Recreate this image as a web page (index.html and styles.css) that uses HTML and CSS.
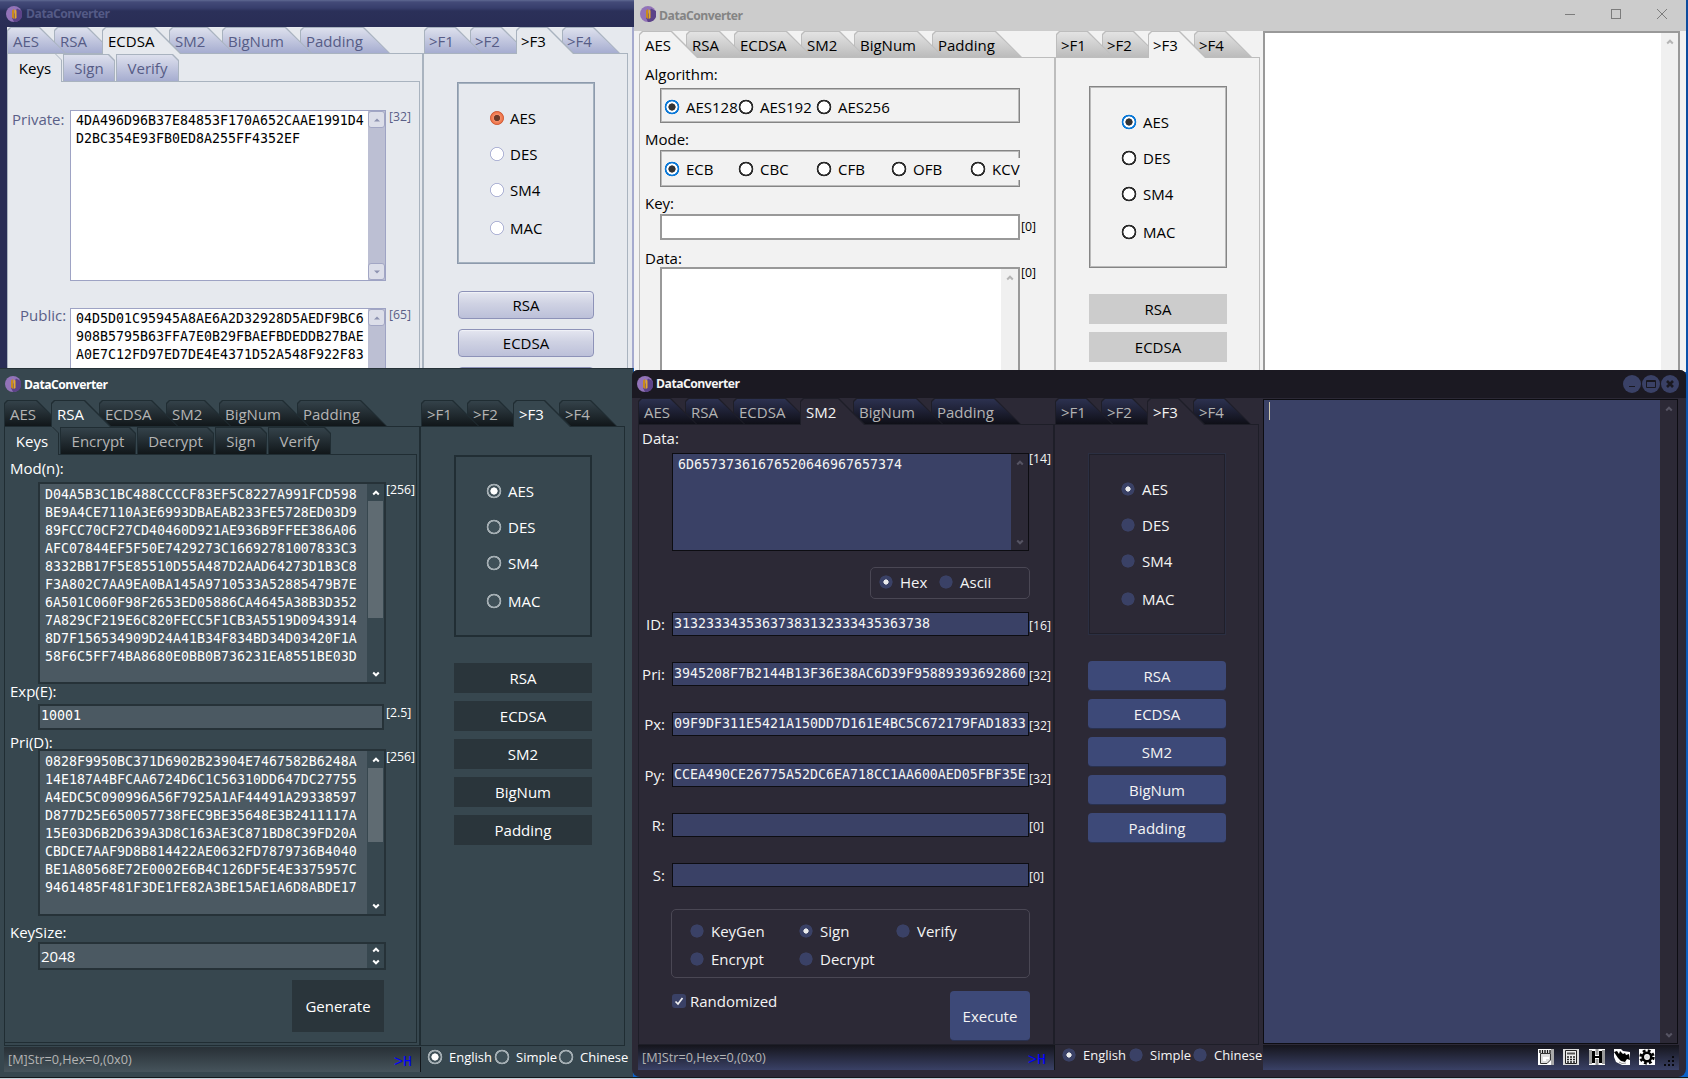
FILE: index.html
```html
<!DOCTYPE html>
<html lang="en">
<head>
    <meta charset="UTF-8">
    <meta name="viewport" content="width=device-width, initial-scale=1.0">
    <title>DataConverter</title>
    <link rel="stylesheet" href="styles.css">
</head>
<body>
    <!-- shared icons -->
    <svg class="defs" width="0" height="0">
        <symbol id="logo" viewBox="0 0 16 16">
            <circle cx="8" cy="8" r="8" fill="#9273b8"/>
            <path d="M11 2.5 L16 5 A8 8 0 0 1 8 16 L6 12 Z" fill="#5c4388"/>
            <path d="M6 4.5 L8 3 V13 L6 11.5 Z" fill="#c98a1c"/>
            <path d="M8.6 3.5 L10.5 4.5 V12 L8.6 13 Z" fill="#e3a82b"/>
        </symbol>
        <symbol id="up" viewBox="0 0 8 8"><path d="M1.2 5.5 L4 2.7 L6.8 5.5" fill="none" stroke="currentColor" stroke-width="2"/></symbol>
        <symbol id="down" viewBox="0 0 8 8"><path d="M1.2 2.5 L4 5.3 L6.8 2.5" fill="none" stroke="currentColor" stroke-width="2"/></symbol>
        <symbol id="tri-up" viewBox="0 0 8 8"><path d="M1 5.5 L4 2.5 L7 5.5 Z" fill="currentColor"/></symbol>
        <symbol id="tri-down" viewBox="0 0 8 8"><path d="M1 2.5 L4 5.5 L7 2.5 Z" fill="currentColor"/></symbol>
    </svg>

    <!-- light blue skin -->
    <div class="window navy">
        <div class="title"><svg class="logo"><use href="#logo"/></svg><span>DataConverter</span></div>
        <div class="body">
            <div class="left">
                <div class="tabs">
                    <div class="tab t1"><span>AES</span></div>
                    <div class="tab t2"><span>RSA</span></div>
                    <div class="tab t3 active"><span>ECDSA</span></div>
                    <div class="tab t4"><span>SM2</span></div>
                    <div class="tab t5"><span>BigNum</span></div>
                    <div class="tab t6"><span>Padding</span></div>
                </div>
                <div class="page">
                    <div class="subtabs">
                        <div class="subtab s-keys active"><span>Keys</span></div>
                        <div class="subtab s-sign"><span>Sign</span></div>
                        <div class="subtab s-verify"><span>Verify</span></div>
                    </div>
                    <div class="subpage">
                        <div class="row private">
                            <label>Private:</label>
                            <div class="memo">
                                <pre>4DA496D96B37E84853F170A652CAAE1991D4
D2BC354E93FB0ED8A255FF4352EF</pre>
                                <div class="scroll"><i><svg><use href="#tri-up"/></svg></i><i><svg><use href="#tri-down"/></svg></i></div>
                            </div>
                            <span class="len">[32]</span>
                        </div>
                        <div class="row public">
                            <label>Public:</label>
                            <div class="memo">
                                <pre>04D5D01C95945A8AE6A2D32928D5AEDF9BC6
908B5795B63FFA7E0B29FBAEFBDEDDB27BAE
A0E7C12FD97ED7DE4E4371D52A548F922F83</pre>
                                <div class="scroll"><i><svg><use href="#tri-up"/></svg></i><i><svg><use href="#tri-down"/></svg></i></div>
                            </div>
                            <span class="len">[65]</span>
                        </div>
                    </div>
                </div>
            </div>
            <div class="mid">
                <div class="tabs">
                    <div class="tab f"><span>&gt;F1</span></div>
                    <div class="tab f"><span>&gt;F2</span></div>
                    <div class="tab f active"><span>&gt;F3</span></div>
                    <div class="tab f"><span>&gt;F4</span></div>
                </div>
                <div class="page">
                    <div class="group algos">
                        <div class="radio on"><i></i>AES</div>
                        <div class="radio"><i></i>DES</div>
                        <div class="radio"><i></i>SM4</div>
                        <div class="radio"><i></i>MAC</div>
                    </div>
                    <div class="buttons">
                        <div class="btn">RSA</div>
                        <div class="btn">ECDSA</div>
                        <div class="btn"></div>
                    </div>
                </div>
            </div>
        </div>
    </div>

    <!-- light gray skin -->
    <div class="window light">
        <div class="title">
            <svg class="logo"><use href="#logo"/></svg><span>DataConverter</span>
            <svg class="controls" width="106" height="12" viewBox="0 0 106 12" fill="none" stroke="#7c7c7c">
                <path d="M0 6.5 H10"/>
                <rect x="46.5" y="1.5" width="9" height="9"/>
                <path d="M92 1 L102 11 M102 1 L92 11"/>
            </svg>
        </div>
        <div class="body">
            <div class="left">
                <div class="tabs">
                    <div class="tab t1 active"><span>AES</span></div>
                    <div class="tab t2"><span>RSA</span></div>
                    <div class="tab t3"><span>ECDSA</span></div>
                    <div class="tab t4"><span>SM2</span></div>
                    <div class="tab t5"><span>BigNum</span></div>
                    <div class="tab t6"><span>Padding</span></div>
                </div>
                <div class="page form">
                    <label class="l-alg">Algorithm:</label>
                    <div class="group opts g-alg">
                        <div class="radio on"><i></i>AES128</div>
                        <div class="radio"><i></i>AES192</div>
                        <div class="radio"><i></i>AES256</div>
                    </div>
                    <label class="l-mode">Mode:</label>
                    <div class="group opts g-mode">
                        <div class="radio on"><i></i>ECB</div>
                        <div class="radio"><i></i>CBC</div>
                        <div class="radio"><i></i>CFB</div>
                        <div class="radio"><i></i>OFB</div>
                        <div class="radio last"><i></i>KCV</div>
                    </div>
                    <label class="l-key">Key:</label>
                    <div class="row key"><div class="field"></div><span class="len">[0]</span></div>
                    <label class="l-data">Data:</label>
                    <div class="row data">
                        <div class="memo"><pre></pre><div class="scroll"><i><svg><use href="#up"/></svg></i></div></div>
                        <span class="len">[0]</span>
                    </div>
                </div>
            </div>
            <div class="mid">
                <div class="tabs">
                    <div class="tab f"><span>&gt;F1</span></div>
                    <div class="tab f"><span>&gt;F2</span></div>
                    <div class="tab f active"><span>&gt;F3</span></div>
                    <div class="tab f"><span>&gt;F4</span></div>
                </div>
                <div class="page">
                    <div class="group algos">
                        <div class="radio on"><i></i>AES</div>
                        <div class="radio"><i></i>DES</div>
                        <div class="radio"><i></i>SM4</div>
                        <div class="radio"><i></i>MAC</div>
                    </div>
                    <div class="buttons">
                        <div class="btn">RSA</div>
                        <div class="btn">ECDSA</div>
                    </div>
                </div>
            </div>
            <div class="editor"><div class="scroll"><i><svg><use href="#up"/></svg></i></div></div>
        </div>
    </div>

    <!-- slate skin -->
    <div class="window slate">
        <div class="title"><svg class="logo"><use href="#logo"/></svg><span>DataConverter</span></div>
        <div class="body">
            <div class="left">
                <div class="tabs">
                    <div class="tab t1"><span>AES</span></div>
                    <div class="tab t2 active"><span>RSA</span></div>
                    <div class="tab t3"><span>ECDSA</span></div>
                    <div class="tab t4"><span>SM2</span></div>
                    <div class="tab t5"><span>BigNum</span></div>
                    <div class="tab t6"><span>Padding</span></div>
                </div>
                <div class="page">
                    <div class="subtabs">
                        <div class="subtab s-keys active"><span>Keys</span></div>
                        <div class="subtab s-enc"><span>Encrypt</span></div>
                        <div class="subtab s-dec"><span>Decrypt</span></div>
                        <div class="subtab s-sign"><span>Sign</span></div>
                        <div class="subtab s-verify"><span>Verify</span></div>
                    </div>
                    <div class="subpage form">
                        <label class="l-mod">Mod(n):</label>
                        <div class="row mod">
                            <div class="memo">
                                <pre>D04A5B3C1BC488CCCCF83EF5C8227A991FCD598
BE9A4CE7110A3E6993DBAEAB233FE5728ED03D9
89FCC70CF27CD40460D921AE936B9FFEE386A06
AFC07844EF5F50E7429273C16692781007833C3
8332BB17F5E85510D55A487D2AAD64273D1B3C8
F3A802C7AA9EA0BA145A9710533A52885479B7E
6A501C060F98F2653ED05886CA4645A38B3D352
7A829CF219E6C820FECC5F1CB3A5519D0943914
8D7F156534909D24A41B34F834BD34D03420F1A
58F6C5FF74BA8680E0BB0B736231EA8551BE03D</pre>
                                <div class="scroll"><i><svg><use href="#up"/></svg></i><b></b><i><svg><use href="#down"/></svg></i></div>
                            </div>
                            <span class="len">[256]</span>
                        </div>
                        <label class="l-exp">Exp(E):</label>
                        <div class="row exp"><div class="field">10001</div><span class="len">[2.5]</span></div>
                        <label class="l-pri">Pri(D):</label>
                        <div class="row prid">
                            <div class="memo">
                                <pre>0828F9950BC371D6902B23904E7467582B6248A
14E187A4BFCAA6724D6C1C56310DD647DC27755
A4EDC5C090996A56F7925A1AF44491A29338597
D877D25E650057738FEC9BE35648E3B2411117A
15E03D6B2D639A3D8C163AE3C871BD8C39FD20A
CBDCE7AAF9D8B814422AE0632FD7879736B4040
BE1A80568E72E0002E6B4C126DF5E4E3375957C
9461485F481F3DE1FE82A3BE15AE1A6D8ABDE17</pre>
                                <div class="scroll"><i><svg><use href="#up"/></svg></i><b></b><i><svg><use href="#down"/></svg></i></div>
                            </div>
                            <span class="len">[256]</span>
                        </div>
                        <label class="l-size">KeySize:</label>
                        <div class="spin"><span>2048</span><div class="arrows"><svg><use href="#up"/></svg><svg><use href="#down"/></svg></div></div>
                        <div class="generate">Generate</div>
                    </div>
                </div>
            </div>
            <div class="mid">
                <div class="tabs">
                    <div class="tab f"><span>&gt;F1</span></div>
                    <div class="tab f"><span>&gt;F2</span></div>
                    <div class="tab f active"><span>&gt;F3</span></div>
                    <div class="tab f"><span>&gt;F4</span></div>
                </div>
                <div class="page">
                    <div class="group algos">
                        <div class="radio on"><i></i>AES</div>
                        <div class="radio"><i></i>DES</div>
                        <div class="radio"><i></i>SM4</div>
                        <div class="radio"><i></i>MAC</div>
                    </div>
                    <div class="buttons">
                        <div class="btn">RSA</div>
                        <div class="btn">ECDSA</div>
                        <div class="btn">SM2</div>
                        <div class="btn">BigNum</div>
                        <div class="btn">Padding</div>
                    </div>
                </div>
            </div>
        </div>
        <div class="status">
            <div class="msg"><span>[M]Str=0,Hex=0,(0x0)</span><em>&gt;H</em></div>
            <div class="langs">
                <div class="radio on"><i></i>English</div>
                <div class="radio"><i></i>Simple</div>
                <div class="radio"><i></i>Chinese</div>
            </div>
        </div>
    </div>

    <!-- dark skin -->
    <div class="window dark">
        <div class="title">
            <svg class="logo"><use href="#logo"/></svg><span>DataConverter</span>
            <svg class="controls" width="56" height="18" viewBox="0 0 56 18">
                <g fill="#3a4166"><circle cx="9" cy="9" r="9"/><circle cx="28" cy="9" r="9"/><circle cx="47" cy="9" r="9"/></g>
                <path d="M6 11.5 H12" stroke="#191820"/>
                <path d="M23.5 5.5 H32.5 V12.5 H23.5 Z M23.5 6.5 H32.5" fill="none" stroke="#191820"/>
                <path d="M44 6 L50 12 M50 6 L44 12" stroke="#191820" stroke-width="2.6"/>
            </svg>
        </div>
        <div class="body">
            <div class="left">
                <div class="tabs">
                    <div class="tab t1"><span>AES</span></div>
                    <div class="tab t2"><span>RSA</span></div>
                    <div class="tab t3"><span>ECDSA</span></div>
                    <div class="tab t4 active"><span>SM2</span></div>
                    <div class="tab t5"><span>BigNum</span></div>
                    <div class="tab t6"><span>Padding</span></div>
                </div>
                <div class="page form">
                    <label class="l-sm2">Data:</label>
                    <div class="row sm2">
                        <div class="memo"><pre>6D65737361676520646967657374</pre><div class="scroll"><i><svg><use href="#up"/></svg></i><i><svg><use href="#down"/></svg></i></div></div>
                        <span class="len">[14]</span>
                    </div>
                    <div class="group enc">
                        <div class="radio on"><i></i>Hex</div>
                        <div class="radio"><i></i>Ascii</div>
                    </div>
                    <div class="row line r-id"><label>ID:</label><div class="field">31323334353637383132333435363738</div><span class="len">[16]</span></div>
                    <div class="row line"><label>Pri:</label><div class="field">3945208F7B2144B13F36E38AC6D39F95889393692860</div><span class="len">[32]</span></div>
                    <div class="row line"><label>Px:</label><div class="field">09F9DF311E5421A150DD7D161E4BC5C672179FAD1833</div><span class="len">[32]</span></div>
                    <div class="row line r-py"><label>Py:</label><div class="field">CCEA490CE26775A52DC6EA718CC1AA600AED05FBF35E</div><span class="len">[32]</span></div>
                    <div class="row line"><label>R:</label><div class="field"></div><span class="len">[0]</span></div>
                    <div class="row line"><label>S:</label><div class="field"></div><span class="len">[0]</span></div>
                    <div class="group ops">
                        <div class="radio"><i></i>KeyGen</div>
                        <div class="radio on"><i></i>Sign</div>
                        <div class="radio"><i></i>Verify</div>
                        <div class="radio"><i></i>Encrypt</div>
                        <div class="radio"><i></i>Decrypt</div>
                    </div>
                    <div class="exec-row">
                        <div class="check">
                            <svg width="14" height="14" viewBox="0 0 14 14"><rect width="14" height="14" rx="3" fill="#3a4166"/><path d="M3.5 7.5 L6 10 L10.5 4" fill="none" stroke="#f0f0f0" stroke-width="1.7"/></svg>
                            <span>Randomized</span>
                        </div>
                        <div class="execute">Execute</div>
                    </div>
                </div>
            </div>
            <div class="mid">
                <div class="tabs">
                    <div class="tab f"><span>&gt;F1</span></div>
                    <div class="tab f"><span>&gt;F2</span></div>
                    <div class="tab f active"><span>&gt;F3</span></div>
                    <div class="tab f"><span>&gt;F4</span></div>
                </div>
                <div class="page">
                    <div class="group algos">
                        <div class="radio on"><i></i>AES</div>
                        <div class="radio"><i></i>DES</div>
                        <div class="radio"><i></i>SM4</div>
                        <div class="radio"><i></i>MAC</div>
                    </div>
                    <div class="buttons">
                        <div class="btn">RSA</div>
                        <div class="btn">ECDSA</div>
                        <div class="btn">SM2</div>
                        <div class="btn">BigNum</div>
                        <div class="btn">Padding</div>
                    </div>
                </div>
            </div>
            <div class="editor"><div class="caret"></div><div class="scroll"><i><svg><use href="#up"/></svg></i><i><svg><use href="#down"/></svg></i></div></div>
        </div>
        <div class="status">
            <div class="msg"><span>[M]Str=0,Hex=0,(0x0)</span><em>&gt;H</em></div>
            <div class="langs">
                <div class="radio on"><i></i>English</div>
                <div class="radio"><i></i>Simple</div>
                <div class="radio"><i></i>Chinese</div>
            </div>
            <div class="tools">
                <svg width="16" height="16" viewBox="0 0 16 16"><path d="M0 0 H16 V16 H0 Z" fill="#fff"/><path d="M13 0 H16 V16 H13 Z" fill="#aaa"/><path d="M2 1 V4 M4.5 1 V4 M7 1 V4 M9.5 1 V4 M12 1 V4" stroke="#111" stroke-width="1.4"/><path d="M2.5 4.5 H12.5 V11 L9 14.5 H2.5 Z" fill="#ddd" stroke="#333"/><path d="M5 8 H11 V10 H8 V12 H5 Z" fill="#fff"/></svg>
                <svg width="16" height="16" viewBox="0 0 16 16"><path d="M0 0 H16 V16 H0 Z" fill="#ddd"/><path d="M2.5 1.5 H13.5 V14.5 H2.5 Z" fill="#eee" stroke="#222"/><path d="M4 4.5 H12" stroke="#555" stroke-width="2"/><path d="M4 8 H12 M4 10.5 H12 M4 13 H12" stroke="#222" stroke-width="1.5" stroke-dasharray="2 1"/></svg>
                <svg class="h" width="16" height="16" viewBox="0 0 16 16"><path d="M0 0 H16 V16 H0 Z" fill="#fff"/><path d="M0 1 H3 V15 H0 Z M13 1 H16 V15 H13 Z M6.5 0 H9.5 V6 H6.5 Z M6.5 10 H9.5 V16 H6.5 Z" fill="#999"/><path d="M3 2 H6 V7 H10 V2 H13 V14 H10 V9 H6 V14 H3 Z" fill="#000"/></svg>
                <svg width="16" height="16" viewBox="0 0 16 16"><path d="M0 0 H7 L9 2 L16 3 V16 H8 L2 13 L0 8 Z" fill="#fff"/><path d="M0 3 L3 2 L5 5 L6 2 L9 5 L11 4 L12 6 L15 5 L16 11 L13 10 L11 13 L7 12 L4 9 Z" fill="#000"/><path d="M5 13 L8 14.5 L12 14" stroke="#999" fill="none"/></svg>
                <svg width="16" height="16" viewBox="0 0 16 16"><path d="M0 0 H16 V16 H0 Z" fill="#fff"/><circle cx="8" cy="8" r="6.3" fill="none" stroke="#000" stroke-width="2.8" stroke-dasharray="2.7 2.25"/><circle cx="8" cy="8" r="4.2" fill="#fff" stroke="#000" stroke-width="2.6"/><circle cx="8" cy="8" r="2" fill="#ddd"/></svg>
                <svg class="grip" width="11" height="11" viewBox="0 0 11 11" fill="#08080c"><path d="M8 0 h2 v2 h-2z M4 4 h2 v2 h-2z M8 4 h2 v2 h-2z M0 8 h2 v2 h-2z M4 8 h2 v2 h-2z M8 8 h2 v2 h-2z"/></svg>
            </div>
        </div>
    </div>
</body>
</html>
```
FILE: styles.css
```css
* {
    box-sizing: border-box;
}

body {
    margin: 0;
    width: 1688px;
    height: 1079px;
    overflow: hidden;
    position: relative;
    background: linear-gradient(#0c4a9c, #0a63c9 1077px, #15181b 1077px, #15181b 1078px, #c3d2da 1078px);
    font-family: "Open Sans", "Noto Sans", sans-serif;
    font-size: 15px;
    line-height: 20px;
}

.defs {
    position: absolute;
}

/* ---------- skins ---------- */
.navy {
    --bg: #e6e9ee;
    --text: #000;
    --tab-text: #565c86;
    --label: #5a5f87;
    --line: #a9b3bf;
    --tab1: #dde0ed;
    --tab2: #a6add0;
    --input: #fff;
    --input-line: #9ea3c4;
    --track: #bcbfd3;
    --arrow: #8d92b0;
    --group: #8d9aac;
    left: 0;
    top: 0;
    width: 634px;
    height: 368px;
}

.light {
    --bg: #f2f2f2;
    --text: #000;
    --tab-text: #000;
    --label: #000;
    --line: #bdbdbd;
    --tab1: #e3e3e3;
    --tab2: #bcbcbc;
    --input: #fff;
    --input-line: #999;
    --track: #f0f0f0;
    --arrow: #b4b4b4;
    --group: #858585;
    left: 634px;
    top: 0;
    width: 1052px;
    height: 372px;
}

.slate {
    --bg: #37474f;
    --text: #fff;
    --tab-text: #b4b4b4;
    --label: #fff;
    --line: #202d33;
    --tab1: #34424a;
    --tab2: #11171a;
    --input: #4b5962;
    --input-line: #263238;
    --track: #37474f;
    --arrow: #fff;
    --group: #212e34;
    left: 0;
    top: 368px;
    width: 633px;
    height: 709px;
}

.dark {
    --bg: #2c2936;
    --text: #f4f4f4;
    --tab-text: #b4b4b4;
    --label: #f4f4f4;
    --line: #1e1e28;
    --tab1: #2c3150;
    --tab2: #0f0f17;
    --input: #3a4166;
    --input-line: #0d0d12;
    --track: #2c2936;
    --arrow: #565463;
    --group: #2b2f42;
    left: 632px;
    top: 370px;
    width: 1054px;
    height: 707px;
    border-radius: 6px 6px 8px 8px;
}

.window {
    position: absolute;
    background: var(--bg);
    color: var(--text);
    overflow: hidden;
}

/* ---------- title bar ---------- */
.title {
    display: flex;
    align-items: center;
    font-weight: bold;
    font-size: 12.2px;
    letter-spacing: -0.5px;
}

.logo {
    width: 16px;
    height: 16px;
    margin-right: 3px;
}

.navy .title {
    height: 27px;
    padding-left: 6px;
    background: linear-gradient(#5f6992 0, #434a78 2px, #373e6c 8px, #2b3059 11px, #292d55);
    color: #545a86;
}

.navy .logo {
    margin-right: 4px;
}

.light .title {
    height: 31px;
    padding: 0 15px 3px 6px;
    background: #ccc;
    color: #848484;
}

.light .title span {
    padding-top: 3px;
}

.slate .title {
    height: 32px;
    padding: 0 0 2px 5px;
    border-top: 1px solid #263238;
}

.slate .title span {
    padding-top: 2px;
}

.dark .title {
    height: 28px;
    padding: 0 7px 0 5px;
    background: #1b1922;
}

.controls {
    margin-left: auto;
}

/* ---------- layout ---------- */
.body {
    display: flex;
    height: 646px;
}

.navy .body {
    border-left: 7px solid #292d55;
    border-right: 2px solid #a5aace;
}

.light .body {
    padding-left: 5px;
}

.slate .body {
    padding-left: 4px;
}

.dark .body {
    height: 647px;
    padding-left: 6px;
}

.left {
    width: 417px;
    display: flex;
    flex-direction: column;
}

.mid {
    width: 204px;
    display: flex;
    flex-direction: column;
    margin-right: 3px;
}

.dark .mid {
    margin-right: 4px;
}

.page {
    flex: 1;
    border: 1px solid var(--line);
}

.left .page {
    border-right-width: 2px;
}

.mid .page {
    border-left: 0;
}

.tabs {
    display: flex;
    height: 26px;
    isolation: isolate;
}

/* ---------- folder tabs ---------- */
.tab {
    position: relative;
    height: 26px;
    padding-left: 6px;
    line-height: 28px;
    color: var(--tab-text);
}

.tab span {
    position: relative;
    z-index: 10;
}

.tab::before,
.tab::after {
    content: "";
    position: absolute;
    left: 0;
    right: -12px;
    top: 0;
    bottom: 0;
    background: var(--line);
    clip-path: polygon(0 3px, 3px 0, calc(100% - 26px) 0, 100% 100%, 0 100%);
    z-index: 1;
}

.tab::after {
    left: 1px;
    right: -11px;
    top: 1px;
    background: linear-gradient(var(--tab1), var(--tab2));
}

.tab:nth-child(1)::before, .tab:nth-child(1)::after { z-index: 6; }
.tab:nth-child(2)::before, .tab:nth-child(2)::after { z-index: 5; }
.tab:nth-child(3)::before, .tab:nth-child(3)::after { z-index: 4; }
.tab:nth-child(4)::before, .tab:nth-child(4)::after { z-index: 3; }
.tab:nth-child(5)::before, .tab:nth-child(5)::after { z-index: 2; }

.tab.active {
    color: var(--text);
}

.tab.active::before,
.tab.active::after {
    z-index: 7;
}

.tab.active::after {
    bottom: -1px;
    background: var(--bg);
}

.t1 { width: 47px; }
.t2 { width: 48px; }
.t3 { width: 67px; }
.t4 { width: 53px; }
.t5 { width: 78px; }
.t6 { width: 78px; }
.f { width: 46px; padding-left: 5px; }
.slate .f, .dark .f { padding-left: 6px; }

/* ---------- sub tabs ---------- */
.subtabs {
    display: flex;
    gap: 1px;
    height: 27px;
    isolation: isolate;
}

.subtab {
    position: relative;
    height: 27px;
    text-align: center;
    line-height: 29px;
    color: var(--tab-text);
    background: var(--line);
    clip-path: polygon(0 0, calc(100% - 6px) 0, 100% 6px, 100% 100%, 0 100%);
}

.subtab span {
    position: relative;
}

.subtab::before {
    content: "";
    position: absolute;
    left: 1px;
    right: 1px;
    top: 1px;
    bottom: 0;
    background: linear-gradient(var(--tab1), var(--tab2));
    clip-path: polygon(0 0, calc(100% - 6px) 0, 100% 6px, 100% 100%, 0 100%);
}

.subtab.active {
    color: var(--text);
    height: 28px;
}

.subtab.active::before {
    left: 0;
    top: 0;
    background: var(--bg);
}

.s-keys { width: 54px; }
.s-sign { width: 52px; }
.s-verify { width: 63px; }
.s-enc { width: 76px; }
.s-dec { width: 77px; }

.subpage {
    margin-right: 2px;
    border-top: 1px solid var(--line);
    border-right: 1px solid var(--line);
    height: 590px;
}

.slate .subpage {
    border-bottom: 1px solid var(--line);
}

/* ---------- inputs ---------- */
.form {
    display: flex;
    flex-direction: column;
}

label {
    color: var(--label);
    padding-left: 5px;
    height: 20px;
}

.row {
    display: flex;
    align-items: flex-start;
}

.len {
    font-size: 12.3px;
    line-height: 16px;
    color: var(--label);
}

.memo {
    display: flex;
    background: var(--input);
    border: 2px solid var(--input-line);
    overflow: hidden;
}

pre,
.field {
    margin: 0;
    font-family: "DejaVu Sans Mono", monospace;
    font-size: 13.29px;
    line-height: 18px;
    white-space: pre;
}

pre {
    flex: 1;
    overflow: hidden;
    padding: 2px 0 0 5px;
}

.field {
    background: var(--input);
    border: 2px solid var(--input-line);
    overflow: hidden;
}

.scroll {
    width: 17px;
    background: var(--track);
    color: var(--arrow);
    display: flex;
    flex-direction: column;
}

.scroll i {
    height: 17px;
    display: flex;
    align-items: center;
    justify-content: center;
}

.scroll i:nth-last-child(1):not(:first-child) {
    margin-top: auto;
}

.scroll svg,
.arrows svg {
    width: 8px;
    height: 8px;
}

.scroll b {
    margin: 0 1px;
    background: #5f6b72;
}

/* ---------- radios ---------- */
.radio {
    display: flex;
    align-items: center;
    gap: 6px;
    line-height: 22px;
    white-space: nowrap;
}

.radio i {
    flex: none;
    width: 16px;
    height: 16px;
    background: radial-gradient(circle, #fff 5.8px, #b0b5d6 6.3px, #b0b5d6 6.8px, transparent 7.2px);
}

.navy .radio {
    gap: 5px;
}

.navy .radio.on i {
    background: radial-gradient(circle, #6d3b2a 2.8px, #f4906b 3.4px, #ee7247 5.8px, #c95a38 6.3px, #d97a5c 6.8px, transparent 7.2px);
}

.light .radio i {
    background: radial-gradient(circle, #fff 5.3px, #2b2b2b 5.8px, #2b2b2b 7.1px, transparent 7.6px);
}

.light .radio.on i {
    background: radial-gradient(circle, #333 3.3px, #fff 3.9px, #fff 5.3px, #0a78d7 5.8px, #0a78d7 7.1px, transparent 7.6px);
}

.slate .radio i {
    background: radial-gradient(circle, #3f5058 5.3px, #a5afb4 5.8px, #a5afb4 7.1px, transparent 7.6px);
}

.slate .radio.on i {
    background: radial-gradient(circle, #fff 3.3px, #3f5058 3.9px, #3f5058 5.3px, #a5afb4 5.8px, #a5afb4 7.1px, transparent 7.6px);
}

.dark .radio i {
    background: radial-gradient(circle, #3a4166 6.3px, transparent 6.8px);
}

.dark .radio.on i {
    background: radial-gradient(circle, #ececec 2.3px, #3a4166 2.9px, #3a4166 6.3px, transparent 6.8px);
}

/* ---------- middle panel ---------- */
.group {
    border: 2px solid var(--group);
}

.light .group,
.navy .group {
    border: 1px solid var(--group);
    box-shadow: inset 0 0 0 1px #bbb;
}

.navy .group {
    box-shadow: inset 0 0 0 1px #a5b2bf;
}

.algos {
    width: 138px;
    height: 182px;
    margin: 28px 0 0 33px;
    padding: 16px 0 0 30px;
}

.light .algos,
.navy .algos {
    padding: 17px 0 0 31px;
}

.dark .algos {
    border: 1px solid var(--group);
    box-shadow: inset 0 0 0 1px #201f2a;
    padding: 17px 0 0 31px;
}

.algos .radio {
    height: 36px;
}

.algos .radio:last-child {
    margin-top: 2px;
}

.buttons {
    margin: 26px 0 0 33px;
    width: 138px;
    display: flex;
    flex-direction: column;
    gap: 8px;
}

.btn {
    height: 30px;
    line-height: 30px;
    text-align: center;
    background: #ccc;
}

.navy .btn {
    height: 28px;
    margin: 1px;
    border: 1px solid #8d92b8;
    border-radius: 4px;
    background: linear-gradient(#e4e6f0, #cfd2e3 45%, #bcc0d9);
    box-shadow: inset 0 1px 1px #f0f2f8;
    line-height: 26px;
}

.slate .btn,
.generate {
    background: #2a353b;
}

.dark .btn,
.execute {
    background: #3d4978;
    border-radius: 4px;
    border-bottom: 1px solid #29314f;
}

/* ---------- editor on the right ---------- */
.editor {
    flex: 1;
    display: flex;
    background: var(--input);
    border: 2px solid var(--input-line);
    margin-right: 5px;
}

.light .editor {
    margin-right: 6px;
}

.editor .scroll {
    margin-left: auto;
}

.dark .editor {
    border-width: 1px;
    margin: 1px 8px 1px 0;
}

.caret {
    width: 1px;
    height: 18px;
    margin: 2px 0 0 5px;
    background: #cfc9b0;
}

/* ---------- navy window ---------- */
.navy label {
    width: 62px;
    margin-top: -1px;
    padding-left: 4px;
}

.navy .memo {
    width: 316px;
    height: 171px;
    border-width: 1px;
}

.navy pre {
    padding-top: 1px;
}

.navy .len {
    margin-left: 3px;
    line-height: 13px;
}

.navy .scroll i {
    border: 1px solid #a2a6c4;
    border-radius: 3px;
    background: #dcdee9;
}

.navy .row {
    height: 198px;
    padding-top: 28px;
}

.navy .public label {
    margin-top: -3px;
    padding-left: 12px;
}

/* ---------- light window ---------- */
.l-alg { margin-top: 6px; }

.opts {
    margin-left: 20px;
    width: 360px;
    display: grid;
    grid-template-columns: 74px 78px 75px 79px 46px;
    padding-left: 3px;
}

.g-alg {
    height: 35px;
    margin-top: 4px;
    padding-top: 7px;
}

.l-mode { margin-top: 6px; }

.g-mode {
    height: 37px;
    margin-top: 1px;
    padding-top: 7px;
}

.opts .radio { height: 22px; }

.opts .last {
    width: 52px;
    background: var(--bg);
    overflow: hidden;
}

.l-key { margin-top: 6px; }
.light .row { margin-left: 20px; }
.light .key { margin-top: 1px; }

.light .field {
    width: 360px;
    height: 26px;
}

.light .len { margin-left: 1px; }
.key .len { margin-top: 5px; }
.l-data { margin-top: 8px; }

.data .memo {
    width: 360px;
    height: 200px;
    margin-top: -1px;
}

.data .len { margin-top: -3px; }

/* ---------- slate window ---------- */
.slate .form { height: 589px; }
.slate .row, .spin { margin-left: 33px; }
.l-mod { margin-top: 3px; }

.slate .memo {
    width: 348px;
}

.mod { margin-top: 4px; }
.mod .memo { height: 202px; }
.mod b { height: 117px; }

.slate .exp .field {
    width: 346px;
    height: 26px;
    padding: 1px;
}

.exp .len { margin: 1px 0 0 2px; }
.l-exp { margin-top: -3px; }
.exp { margin-top: 3px; }
.l-pri { margin-top: 2px; }
.prid { margin-top: -3px; }
.prid .memo { height: 167px; }
.prid b { height: 74px; }
.l-size { margin-top: 6px; }

.spin {
    display: flex;
    justify-content: space-between;
    width: 348px;
    height: 28px;
    background: var(--input);
    border: 2px solid var(--input-line);
    line-height: 24px;
    padding-left: 1px;
}

.arrows {
    width: 17px;
    background: var(--track);
    display: flex;
    flex-direction: column;
    align-items: center;
    justify-content: space-around;
}

.generate {
    width: 92px;
    height: 52px;
    line-height: 53px;
    text-align: center;
    margin: 10px 0 0 287px;
}

/* ---------- dark window ---------- */
.l-sm2 { margin-top: 3px; padding-left: 3px; }

.dark .page { padding-right: 0; }
.sm2 { margin: 5px 0 0 33px; }

.sm2 .memo {
    width: 357px;
    height: 98px;
    border-width: 1px;
}

.sm2 .len { margin-top: -2px; }

.enc {
    width: 160px;
    height: 32px;
    margin: 16px 0 0 231px;
    display: flex;
    gap: 0;
    padding: 3px 0 0 7px;
}

.enc .radio:first-child { width: 60px; }

.dark .enc,
.dark .ops {
    border: 1px solid #4a4754;
    border-radius: 5px;
}

.enc .radio, .ops .radio { height: 22px; }

.line {
    height: 24px;
    margin-top: 26px;
}

.r-id { margin-top: 13px; }
.r-py { margin-top: 27px; }

.line label {
    width: 33px;
    padding: 2px 7px 0 0;
    text-align: right;
}

.line .field {
    width: 357px;
    height: 24px;
    border-width: 1px;
    padding: 2px 1px;
}

.line .len { margin-top: 6px; }
.r-py .len { margin-top: 8px; }

.ops {
    width: 359px;
    height: 69px;
    margin: 22px 0 0 32px;
    padding: 10px 0 0 17px;
    display: grid;
    grid-template-columns: 109px 97px 100px;
    grid-auto-rows: 28px;
}

.exec-row {
    display: flex;
    justify-content: space-between;
    margin: 13px 0 0 33px;
    width: 358px;
}

.check {
    display: flex;
    gap: 4px;
}

.check svg { margin-top: 3px; }

.execute {
    width: 80px;
    height: 50px;
    line-height: 50px;
    text-align: center;
}

/* ---------- status bar ---------- */
.status {
    display: flex;
    height: 25px;
}

.slate .status {
    padding-left: 4px;
    margin-top: 1px;
}

.dark .status {
    padding-left: 6px;
}

.msg {
    width: 417px;
    display: flex;
    justify-content: space-between;
    padding: 0 8px 0 4px;
    font-size: 12.7px;
    line-height: 25px;
    color: #b4b4b4;
    border-right: 1px solid #12161a;
    background: linear-gradient(#283036, #46545c);
}

.dark .msg,
.tools {
    background: linear-gradient(#15151c, #3a4166);
}

.msg em {
    font-style: normal;
    font-family: "Liberation Mono", monospace;
    font-size: 15px;
    line-height: 31px;
    color: #0000ff;
}

.langs {
    width: 207px;
    display: flex;
    font-size: 13px;
    padding-left: 6px;
}

.dark .langs {
    width: 208px;
}

.langs .radio {
    width: 67px;
    height: 20px;
    flex: none;
}

.dark .langs .radio {
    height: 19px;
}

.langs .radio:nth-child(2) { width: 64px; }

.tools {
    flex: 1;
    margin-right: 7px;
    display: flex;
    justify-content: flex-end;
    align-items: flex-start;
    gap: 9px;
    padding: 4px 4px 0 0;
}

.tools .h {
    margin-left: 1px;
}

.grip {
    margin-top: 7px;
}
```
